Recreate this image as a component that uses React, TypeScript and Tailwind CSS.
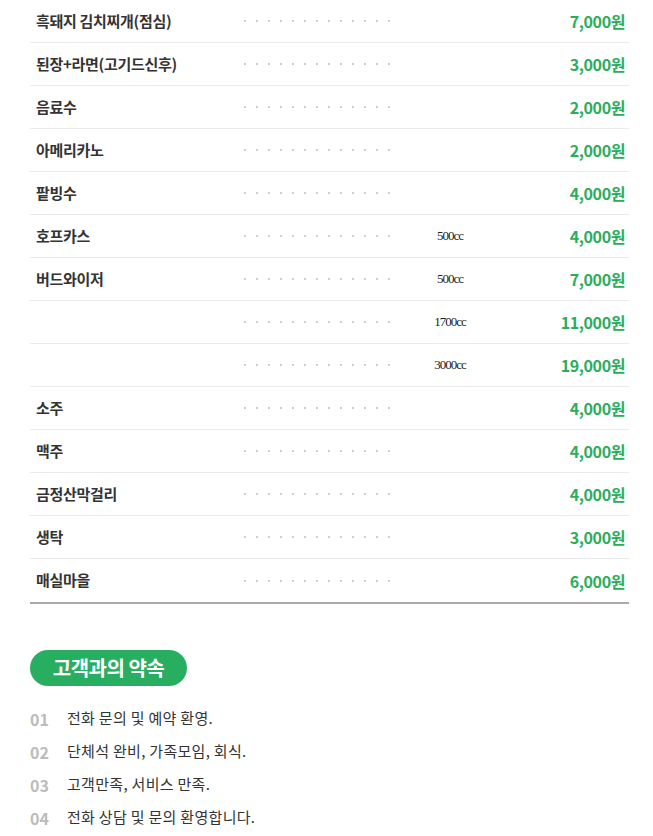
const rows: { name: string; vol?: string; price: string }[] = [
  { name: "흑돼지 김치찌개(점심)", price: "7,000원" },
  { name: "된장+라면(고기드신후)", price: "3,000원" },
  { name: "음료수", price: "2,000원" },
  { name: "아메리카노", price: "2,000원" },
  { name: "팥빙수", price: "4,000원" },
  { name: "호프카스", vol: "500cc", price: "4,000원" },
  { name: "버드와이저", vol: "500cc", price: "7,000원" },
  { name: "", vol: "1700cc", price: "11,000원" },
  { name: "", vol: "3000cc", price: "19,000원" },
  { name: "소주", price: "4,000원" },
  { name: "맥주", price: "4,000원" },
  { name: "금정산막걸리", price: "4,000원" },
  { name: "생탁", price: "3,000원" },
  { name: "매실마을", price: "6,000원" },
];

const promises = [
  "전화 문의 및 예약 환영.",
  "단체석 완비, 가족모임, 회식.",
  "고객만족, 서비스 만족.",
  "전화 상담 및 문의 환영합니다.",
];

function Dots() {
  return (
    <div className="flex w-[150px] gap-[10px] pl-[1px]">
      {Array.from({ length: 13 }).map((_, i) => (
        <span key={i} className="block w-[2px] h-[2px] bg-[#cfcfcf]" />
      ))}
    </div>
  );
}

export default function App() {
  return (
    <div
      className="w-[653px] min-h-[836px] bg-white px-[30px] text-[#333]"
      style={{ fontFamily: '"Noto Sans CJK KR", "Noto Sans", sans-serif' }}
    >
      <ul className="w-[599px] border-b-2 border-[#aaaaaa]">
        {rows.map((r, i) => (
          <li
            key={i}
            className={
              "flex items-center h-[43px] " +
              (i < rows.length - 1 ? "border-b border-[#ebebeb]" : "")
            }
          >
            <div className="w-[213px] pl-[6px] text-[15px] font-bold tracking-[-0.3px] text-[#333]">
              {r.name}
            </div>
            <Dots />
            <div
              className="w-[114px] text-center text-[13px] tracking-[-1px] text-[#222]"
              style={{ fontFamily: '"Liberation Serif", serif' }}
            >
              {r.vol}
            </div>
            <div className="flex-1 text-right pr-[4px] text-[16px] font-bold tracking-[-0.4px] text-[#2aae5c]">
              {r.price}
            </div>
          </li>
        ))}
      </ul>

      <div className="mt-[46px] inline-flex items-center justify-center h-[36px] w-[157px] rounded-full bg-[#27ae60] text-white text-[20px] font-bold tracking-[-0.5px]">
        고객과의 약속
      </div>

      <ul className="mt-[16px]">
        {promises.map((p, i) => (
          <li key={i} className="flex items-center h-[33px]">
            <span className="w-[37px] text-[16px] font-bold text-[#bbbbbb]">
              0{i + 1}
            </span>
            <span className="text-[15px] tracking-[0.3px] text-[#333]">{p}</span>
          </li>
        ))}
      </ul>
    </div>
  );
}
